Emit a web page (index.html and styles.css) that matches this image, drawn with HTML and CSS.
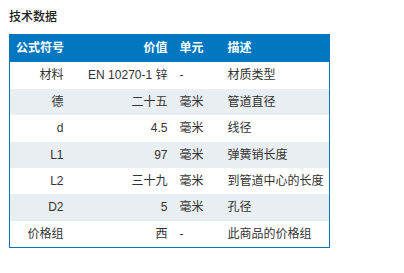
FILE: index.html
```html
<!DOCTYPE html>
<html lang="zh">
<head>
<meta charset="utf-8">
<link rel="stylesheet" href="styles.css">
</head>
<body>
<div class="panel">
  <h3 class="title">技术数据</h3>
  <table class="spec">
    <colgroup>
      <col class="c1"><col class="c2"><col class="c3"><col class="c4">
    </colgroup>
    <thead>
      <tr><th class="r">公式符号</th><th class="r">价值</th><th class="l">单元</th><th class="l">描述</th></tr>
    </thead>
    <tbody>
      <tr><td class="r">材料</td><td class="r">EN 10270-1 锌</td><td class="l">-</td><td class="l">材质类型</td></tr>
      <tr><td class="r">德</td><td class="r">二十五</td><td class="l">毫米</td><td class="l">管道直径</td></tr>
      <tr><td class="r">d</td><td class="r">4.5</td><td class="l">毫米</td><td class="l">线径</td></tr>
      <tr><td class="r">L1</td><td class="r">97</td><td class="l">毫米</td><td class="l">弹簧销长度</td></tr>
      <tr><td class="r">L2</td><td class="r">三十九</td><td class="l">毫米</td><td class="l">到管道中心的长度</td></tr>
      <tr><td class="r">D2</td><td class="r">5</td><td class="l">毫米</td><td class="l">孔径</td></tr>
      <tr><td class="r">价格组</td><td class="r">西</td><td class="l">-</td><td class="l">此商品的价格组</td></tr>
    </tbody>
  </table>
</div>
</body>
</html>
```
FILE: styles.css
```css
html, body {
  margin: 0;
  padding: 0;
  background: #ffffff;
}
body {
  font-family: "Liberation Sans", "Noto Sans CJK SC", Arial, sans-serif;
  font-size: 12px;
  color: #333333;
}
.panel {
  padding: 9px 0 0 9px;
}
.title {
  margin: 0 0 9px 0;
  font-size: 12px;
  line-height: 16px;
  font-weight: 500;
  color: #222222;
}
.spec {
  border-collapse: collapse;
  table-layout: fixed;
  width: 321px;
  border: 1px solid #0a74bc;
}
.c1 { width: 60px; }
.c2 { width: 104px; }
.c3 { width: 48px; }
.c4 { width: 108px; }
.spec th, .spec td {
  padding: 5px 6px;
  line-height: 16.4px;
  white-space: nowrap;
}
.spec th {
  background: #0077c0;
  color: #ffffff;
  font-weight: bold;
  padding-top: 5px;
  padding-bottom: 6px;
}
.spec .r { text-align: right; }
.spec .l { text-align: left; }
.spec tbody tr:nth-child(even) td {
  background: #e9eef2;
}
.spec tbody tr:nth-child(odd) td {
  background: #ffffff;
}
```
